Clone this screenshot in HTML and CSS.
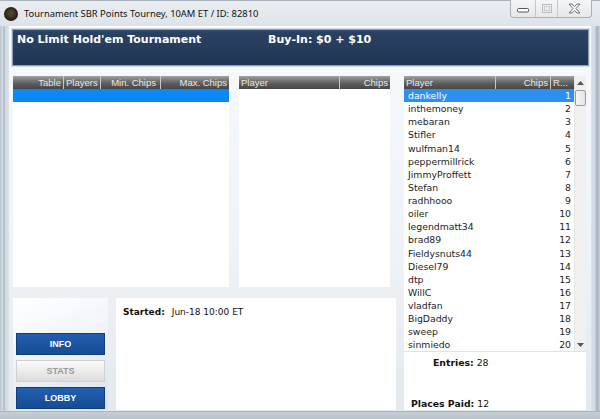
FILE: index.html
```html
<!DOCTYPE html>
<html>
<head>
<meta charset="utf-8">
<link rel="stylesheet" href="styles.css">
</head>
<body>
<div class="window">
  <div class="titlebar">
    <span class="app-icon"></span>
    <span class="title">Tournament SBR Points Tourney, 10AM ET / ID: 82810</span>
    <div class="controls">
      <span class="ctl ctl-min"><svg width="12" height="5" viewBox="0 0 12 5"><rect x="0.5" y="0.5" width="11" height="3.5" rx="1" fill="#fff" stroke="#555"/></svg></span>
      <span class="ctl ctl-max"><svg width="10" height="9" viewBox="0 0 10 9"><rect x="0.5" y="0.5" width="9" height="8" fill="none" stroke="#bbb"/><rect x="2.5" y="2.5" width="5" height="4" fill="none" stroke="#ccc"/></svg></span>
      <span class="ctl ctl-close"><svg width="13" height="11" viewBox="0 0 13 11"><path d="M1 1 L4 1 L6.5 3.5 L9 1 L12 1 L8 5.5 L12 10 L9 10 L6.5 7.5 L4 10 L1 10 L5 5.5 Z" fill="#f4f4f4" stroke="#666" stroke-width="0.9" stroke-linejoin="round"/></svg></span>
    </div>
  </div>
  <div class="frame">
    <div class="client">
      <div class="banner">
        <span class="banner-title">No Limit Hold'em Tournament</span>
        <span class="banner-buyin">Buy-In: $0 + $10</span>
      </div>
      <div class="main">
        <div class="leftcol">
          <div class="toprow">
            <div class="panel tables">
              <div class="lhead">
                <span class="hc hc-table">Table</span>
                <span class="hc hc-players">Players</span>
                <span class="hc hc-min">Min. Chips</span>
                <span class="hc hc-max">Max. Chips</span>
              </div>
              <div class="selrow"></div>
            </div>
            <div class="panel players">
              <div class="lhead">
                <span class="hc hc-pname">Player</span>
                <span class="hc hc-pchips">Chips</span>
              </div>
            </div>
          </div>
          <div class="bottomrow">
            <div class="navpanel">
              <span class="btn btn-dark">INFO</span>
              <span class="btn btn-light">STATS</span>
              <span class="btn btn-dark">LOBBY</span>
            </div>
            <div class="panel info">
              <span class="info-label">Started:</span><span class="info-value">Jun-18 10:00 ET</span>
            </div>
          </div>
        </div>
        <div class="rightcol">
          <div class="panel ranks">
            <div class="rlist">
              <div class="lhead">
                <span class="hc hc-rname">Player</span>
                <span class="hc hc-rchips">Chips</span>
                <span class="hc hc-rank">R...</span>
              </div>
              <div class="row selected"><span class="rname">dankelly</span><span class="rnum">1</span></div>
              <div class="row"><span class="rname">inthemoney</span><span class="rnum">2</span></div>
              <div class="row"><span class="rname">mebaran</span><span class="rnum">3</span></div>
              <div class="row"><span class="rname">Stifler</span><span class="rnum">4</span></div>
              <div class="row"><span class="rname">wulfman14</span><span class="rnum">5</span></div>
              <div class="row"><span class="rname">peppermillrick</span><span class="rnum">6</span></div>
              <div class="row"><span class="rname">JimmyProffett</span><span class="rnum">7</span></div>
              <div class="row"><span class="rname">Stefan</span><span class="rnum">8</span></div>
              <div class="row"><span class="rname">radhhooo</span><span class="rnum">9</span></div>
              <div class="row"><span class="rname">oiler</span><span class="rnum">10</span></div>
              <div class="row"><span class="rname">legendmatt34</span><span class="rnum">11</span></div>
              <div class="row"><span class="rname">brad89</span><span class="rnum">12</span></div>
              <div class="row"><span class="rname">Fieldysnuts44</span><span class="rnum">13</span></div>
              <div class="row"><span class="rname">Diesel79</span><span class="rnum">14</span></div>
              <div class="row"><span class="rname">dtp</span><span class="rnum">15</span></div>
              <div class="row"><span class="rname">WillC</span><span class="rnum">16</span></div>
              <div class="row"><span class="rname">vladfan</span><span class="rnum">17</span></div>
              <div class="row"><span class="rname">BigDaddy</span><span class="rnum">18</span></div>
              <div class="row"><span class="rname">sweep</span><span class="rnum">19</span></div>
              <div class="row"><span class="rname">sinmiedo</span><span class="rnum">20</span></div>
            </div>
            <div class="scrollbar">
              <span class="sb-arrow"><svg width="7" height="4" viewBox="0 0 7 4"><path d="M0 4 L3.5 0 L7 4 Z" fill="#555"/></svg></span>
              <span class="sb-thumb"></span>
              <span class="sb-track"></span>
              <span class="sb-arrow"><svg width="7" height="4" viewBox="0 0 7 4"><path d="M0 0 L3.5 4 L7 0 Z" fill="#555"/></svg></span>
            </div>
          </div>
          <div class="panel summary">
            <div class="sum-entries"><b>Entries:</b> 28</div>
            <div class="sum-paid"><b>Places Paid:</b> 12</div>
          </div>
        </div>
      </div>
    </div>
  </div>
</div>
</body>
</html>
```

FILE: styles.css
```css
* { box-sizing: border-box; }
html, body { margin: 0; padding: 0; }
body { width: 600px; height: 419px; overflow: hidden; background: #cfd6de; }

.window {
  width: 600px;
  height: 419px;
  display: flex;
  flex-direction: column;
  background: linear-gradient(90deg, #b9c4cf 0, #d8e0e8 3px, #9ea9b4 4px, #cdd7e1 5px, #dbe3eb 9px, #dbe3eb 591px, #cdd7e1 595px, #a5b0bb 597px, #c9d2db 600px);
}

.titlebar {
  height: 26px;
  flex: none;
  display: flex;
  align-items: center;
  position: relative;
  background: linear-gradient(180deg, #e9edf1 0, #e3e8ed 60%, #dde3e9 100%);
  border-top: 1px solid #a9b3bd;
}
.app-icon {
  width: 14px;
  height: 14px;
  margin-left: 4px;
  border-radius: 50%;
  background: radial-gradient(circle at 50% 45%, #5a4a30 0, #3a2f1e 45%, #1d1a14 70%, #8c7a55 85%, #3b3428 100%);
}
.title {
  margin-left: 6px;
  font-family: "Noto Sans", "Open Sans", sans-serif;
  font-size: 9.4px;
  color: #111;
}
.controls {
  position: absolute;
  right: 8px;
  top: -1px;
  display: flex;
  height: 18px;
  border: 1px solid #a8b0b9;
  border-top: none;
  border-radius: 0 0 4px 4px;
  background: linear-gradient(180deg, #f3f5f7, #e6e9ec);
  overflow: hidden;
}
.ctl {
  display: flex;
  align-items: center;
  justify-content: center;
  height: 100%;
}
.ctl-min { width: 25px; border-right: 1px solid #c2c8ce; padding-top: 4px; }
.ctl-max { width: 22px; border-right: 1px solid #c2c8ce; }
.ctl-close { width: 33px; }

.frame {
  flex: 1;
  padding: 0 9px 8px 9px;
  display: flex;
  background: linear-gradient(180deg, transparent 0, transparent 385px, #8e99a4 385px, #c7ced6 386px, #b8c0c9 393px);
}
.client {
  flex: 1;
  display: flex;
  flex-direction: column;
  background: linear-gradient(180deg, #f7f9fb 0, #f1f4f7 50%, #e4e9ee 100%);
  border-top: 1px solid #ffffff;
}

.banner {
  margin: 2px 2px 0 3px;
  height: 37px;
  flex: none;
  display: flex;
  align-items: flex-start;
  padding: 3px 0 0 4px;
  background: linear-gradient(180deg, #36506f 0, #2a4262 6%, #253b5b 60%, #1f3452 100%);
  border: 1px solid #8ea0b6;
  box-shadow: 0 0 0 1px #d3dbe4;
  font-family: "DejaVu Sans", Verdana, sans-serif;
  font-weight: bold;
  font-size: 11px;
  color: #fff;
}
.banner-title { width: 251px; }

.main {
  display: flex;
  gap: 8px;
  margin-top: 10px;
  padding-left: 4px;
  height: 334px;
}
.leftcol {
  width: 383px;
  display: flex;
  flex-direction: column;
  gap: 11px;
}
.toprow {
  height: 211px;
  display: flex;
  gap: 10px;
}
.bottomrow {
  height: 112px;
  display: flex;
  gap: 8px;
}
.panel { background: #fff; }
.tables { width: 216px; }
.players { width: 151px; }

.lhead {
  height: 13px;
  display: flex;
  background: linear-gradient(180deg, #a3a3a3 0, #7a7a7a 30%, #5c5c5c 60%, #474747 100%);
  font-family: "Liberation Sans", Arial, sans-serif;
  font-size: 9.5px;
  line-height: 13px;
  color: #e8e8e8;
}
.hc {
  height: 13px;
  padding: 0 2px;
  border-right: 1px solid #c9c9c9;
  white-space: nowrap;
  overflow: hidden;
}
.hc-table { width: 51px; text-align: right; }
.hc-players { width: 37px; }
.hc-min { width: 60px; text-align: right; padding-right: 4px; }
.hc-max { flex: 1; text-align: right; border-right: none; }
.hc-pname { width: 101px; }
.hc-pchips { flex: 1; text-align: right; border-right: none; }
.hc-rname { width: 92px; }
.hc-rchips { width: 55px; text-align: right; }
.hc-rank { flex: 1; border-right: none; }

.selrow { height: 13px; background: #0b87f6; }

.navpanel {
  width: 95px;
  display: flex;
  flex-direction: column;
  justify-content: flex-end;
  gap: 5px;
  padding: 0 3px 1px 3px;
  background: linear-gradient(160deg, #ffffff 0, #f1f5f9 40%, #d9e2eb 100%);
}
.btn {
  height: 22px;
  display: flex;
  align-items: center;
  justify-content: center;
  font-family: "Liberation Sans", Arial, sans-serif;
  font-weight: bold;
  font-size: 9px;
}
.btn-dark {
  background: linear-gradient(180deg, #2460b0 0, #1b55a3 50%, #164b94 100%);
  color: #fff;
  border: 1px solid #0f3d7c;
}
.btn-light {
  background: linear-gradient(180deg, #fafafa 0, #ececec 50%, #dcdcdc 100%);
  color: #9a9a9a;
  border: 1px solid #d0d0d0;
}
.info {
  width: 280px;
  padding: 9px 0 0 7px;
  font-family: "DejaVu Sans", Verdana, sans-serif;
  font-size: 9px;
  color: #111;
}
.info-label { font-weight: bold; margin-right: 7px; }

.rightcol {
  width: 182px;
  display: flex;
  flex-direction: column;
}
.ranks {
  height: 276px;
  display: flex;
  border-bottom: 1px solid #dfe3e7;
}
.rlist { flex: 1; }
.row {
  height: 13.125px;
  display: flex;
  justify-content: space-between;
  align-items: center;
  padding: 0 3px 0 4px;
  font-family: "DejaVu Sans", Verdana, sans-serif;
  font-size: 9.3px;
  color: #222;
}
.row.selected { background: #2d8ff2; color: #fff; }
.scrollbar {
  width: 12px;
  display: flex;
  flex-direction: column;
  align-items: center;
  background: #f0f0f0;
  border-left: 1px solid #e6e6e6;
}
.sb-arrow {
  height: 13px;
  width: 100%;
  display: flex;
  align-items: center;
  justify-content: center;
}
.sb-thumb {
  width: 11px;
  height: 16px;
  margin-top: 1px;
  border: 1px solid #9a9a9a;
  border-radius: 2px;
  background: linear-gradient(90deg, #f6f6f6, #e3e3e3);
}
.sb-track { flex: 1; }

.summary {
  flex: 1;
  display: flex;
  flex-direction: column;
  justify-content: space-between;
  padding: 5px 0 1px 7px;
  font-family: "DejaVu Sans", Verdana, sans-serif;
  font-size: 9.3px;
  color: #111;
}
.sum-entries { padding-left: 22px; }
```
